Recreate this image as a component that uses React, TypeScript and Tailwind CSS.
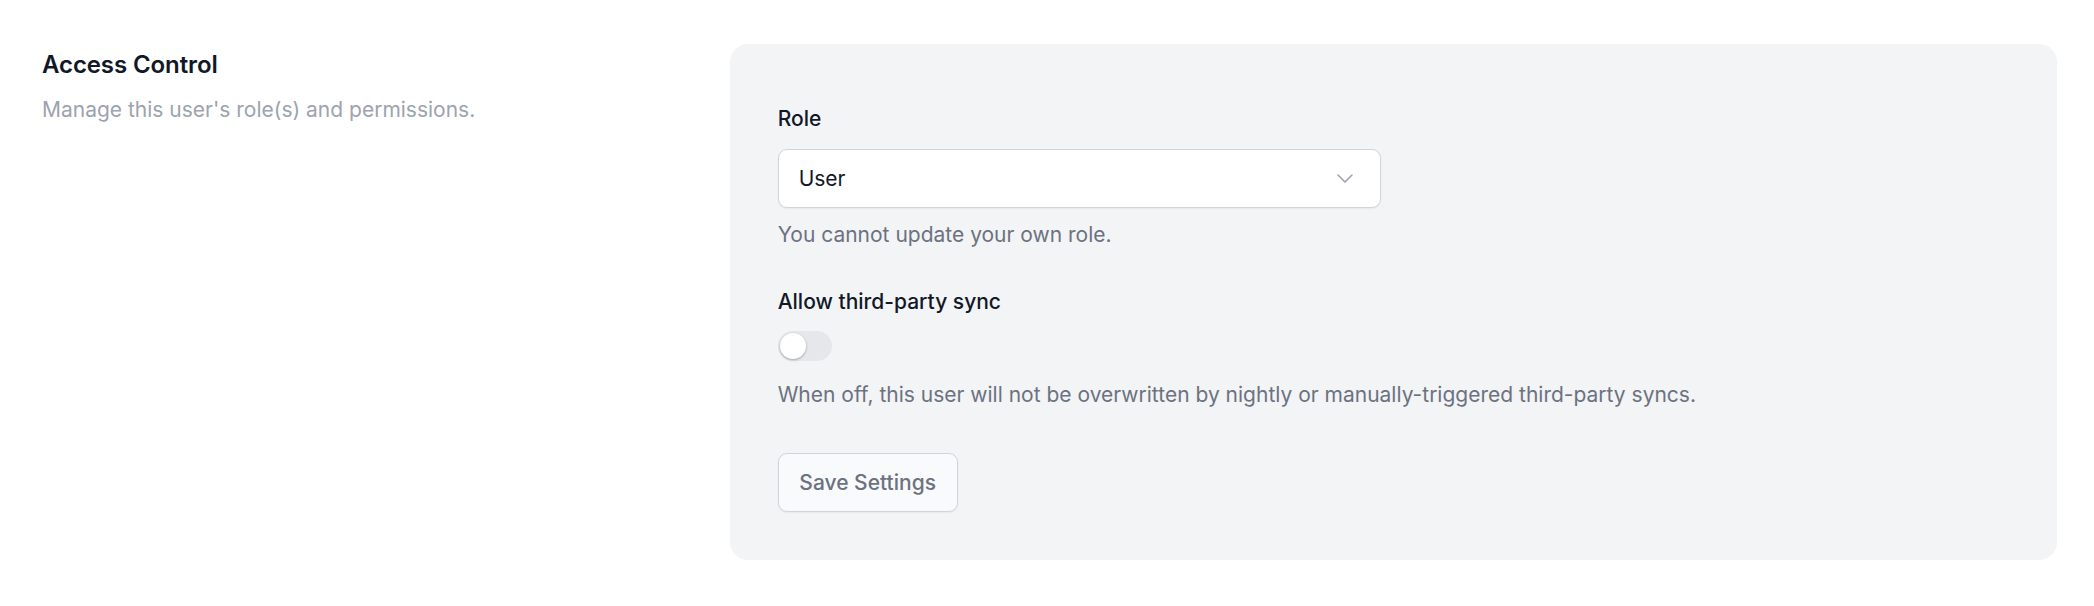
export default function App() {
  return (
    <div className="min-h-screen bg-white font-['Inter',sans-serif] antialiased">
      <div className="grid grid-cols-3 gap-x-[48px] pl-[42px] pr-[37px] pt-[44px]">
        <div>
          <h2 className="text-[24px] leading-[42px] font-semibold text-[#111827] tracking-[-0.1px]">
            Access Control
          </h2>
          <p className="mt-[6px] text-[21px] leading-[36px] text-[#9ca3af]">
            Manage this user's role(s) and permissions.
          </p>
        </div>
        <div className="col-span-2 rounded-[18px] bg-[#f3f4f6] p-[48px]">
          <div className="mt-[12px] text-[21px] leading-[30px] font-medium text-[#111827]">Role</div>
          <div className="mt-[15px] flex h-[59px] w-[603px] items-center justify-between rounded-[9px] border border-[#d1d5db] bg-white pl-[20px] pr-[27px] shadow-[0_1px_2px_rgba(0,0,0,0.05)]">
            <span className="text-[21px] leading-[30px] text-[#111827]">User</span>
            <svg width="16" height="9" viewBox="0 0 16 9" fill="none">
              <path d="M1 1l7 7 7-7" stroke="#9ca3af" strokeWidth="1.6" strokeLinecap="round" strokeLinejoin="round" />
            </svg>
          </div>
          <p className="mt-[12px] text-[21px] leading-[30px] text-[#6b7280]">You cannot update your own role.</p>

          <div className="mt-[37px] text-[21px] leading-[30px] font-medium text-[#111827]">Allow third-party sync</div>
          <div className="mt-[14px] flex h-[30px] w-[54px] items-center rounded-full bg-[#e5e7eb] px-[2px]">
            <span className="block h-[26px] w-[26px] rounded-full bg-white shadow-[0_1px_3px_rgba(0,0,0,0.2),0_1px_2px_rgba(0,0,0,0.1)]" />
          </div>
          <p className="mt-[19px] text-[21px] leading-[30px] text-[#6b7280]">
            When off, this user will not be overwritten by nightly or manually-triggered third-party syncs.
          </p>

          <button className="mt-[43px] flex h-[59px] w-[180px] items-center justify-center rounded-[9px] border border-[#d1d5db] bg-[#f9fafb] text-[21px] leading-[30px] font-medium text-[#6b7280] shadow-[0_1px_2px_rgba(0,0,0,0.05)]">
            Save Settings
          </button>
        </div>
      </div>
    </div>
  );
}
